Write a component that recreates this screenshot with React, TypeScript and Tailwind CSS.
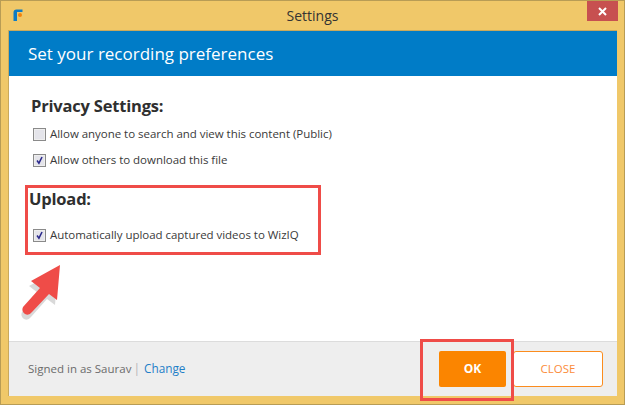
const font = "font-['Open_Sans','Noto_Sans',sans-serif]"

function Check({ checked, label }: { checked?: boolean; label: string }) {
  return (
    <div className="flex items-center gap-[4px] pl-[24px] h-[16px]">
      <span className="w-[13px] h-[13px] border border-[#8a8a8a] bg-[#eeeeee] flex items-center justify-center p-[1px]">
        <span className="w-full h-full bg-[#e4e4ea] flex items-center justify-center">
          {checked && (
            <svg width="11" height="11" viewBox="0 0 11 11">
              <path d="M2.5 5.5 L4.8 8.8 L8.6 1.2" fill="none" stroke="#2b2a8c" strokeWidth="1.9" />
            </svg>
          )}
        </span>
      </span>
      <span className="text-[11.5px] leading-none tracking-[-0.03px] text-[#3a3a3a]">{label}</span>
    </div>
  )
}

export default function App() {
  return (
    <div className={`${font} relative w-[625px] h-[405px] overflow-hidden bg-[#f0c869] border border-[#b89c55] flex flex-col`}>
      {/* Title bar */}
      <div className="h-[29px] shrink-0 flex items-center relative">
        <svg className="absolute left-[12px] top-[8px]" width="11" height="13" viewBox="0 0 11 13">
          <path d="M0.5 12 V3.5 Q0.5 0.5 3.5 0.5 H9.5 V3 H4 V12 Z" fill="#0f7cc4" />
          <circle cx="7" cy="6" r="2" fill="#f5820a" />
        </svg>
        <span className="w-full text-center text-[14px] text-[#333333]">Settings</span>
        <div className="absolute right-[6px] top-0 w-[31px] h-[20px] bg-[#c75050] flex items-center justify-center">
          <svg width="9" height="9" viewBox="0 0 9 9">
            <path d="M1 1 L8 8 M8 1 L1 8" stroke="#ffffff" strokeWidth="2" />
          </svg>
        </div>
      </div>

      {/* Dialog body */}
      <div className="mx-[7px] flex flex-col h-[366px] bg-white border-t border-l border-[#c9a95c]">
        <div className="h-[45px] shrink-0 bg-[#007cc7] pl-[19px] flex items-center">
          <span className="text-[17px] text-white leading-none">Set your recording preferences</span>
        </div>
        <div className="flex-1 flex flex-col">
          <div className="pl-[22px] pt-[20px] h-[50px] text-[16.5px] font-bold tracking-[-0.2px] text-[#2f2f2f] leading-[20px]">Privacy Settings:</div>
          <Check label="Allow anyone to search and view this content (Public)" />
          <div className="h-[10px]" />
          <Check checked label="Allow others to download this file" />
          <div className="pl-[20px] pt-[19px] h-[57px] text-[16.5px] font-bold tracking-[-0.2px] text-[#2f2f2f] leading-[20px] mt-[2px]">Upload:</div>
          <Check checked label="Automatically upload captured videos to WizIQ" />
        </div>
        <div className="h-[55px] shrink-0 bg-[#eeeeee] border-t border-[#dcdcdc] flex items-center pl-[19px] pr-[14px] relative">
          <span className="text-[11.5px] text-[#6b6b6b]">Signed in as Saurav</span>
          <span className="ml-[2px] text-[12px] text-[#b5b5b5]">|</span>
          <span className="ml-[4px] text-[11.8px] text-[#1f7fc8]">Change</span>
          <div className="ml-auto flex">
            <button className="w-[67px] h-[36px] rounded-[2px] bg-[#fb8500] text-white text-[12px] font-bold">OK</button>
            <button className="ml-[7px] w-[90px] h-[36px] rounded-[3px] bg-white border border-[#fb8c1e] text-[#fb8c3a] text-[11.5px]">CLOSE</button>
          </div>
        </div>
      </div>

      {/* Annotations */}
      <div className="absolute left-[24px] top-[184px] w-[296px] h-[70px] border-[3px] border-[#ef4c48]" />
      <div className="absolute left-[419px] top-[338px] w-[94px] h-[62px] border-[3px] border-[#ef4c48]" />
      <svg className="absolute left-[14px] top-[258px]" width="60" height="70" viewBox="0 0 60 70">
        <path d="M44 8 L15 24 L24 31 L8 50 Q6 54 10 57 Q14 59 17 55 L33 37 L41 43 Z" fill="#000000" opacity="0.15" transform="translate(-1 3)" />
        <path d="M45 6 L16 22 L25 29 L8 48 Q6 52 10 55 Q14 57 17 53 L34 35 L42 41 Z" fill="#ef4c48" />
      </svg>
    </div>
  )
}
